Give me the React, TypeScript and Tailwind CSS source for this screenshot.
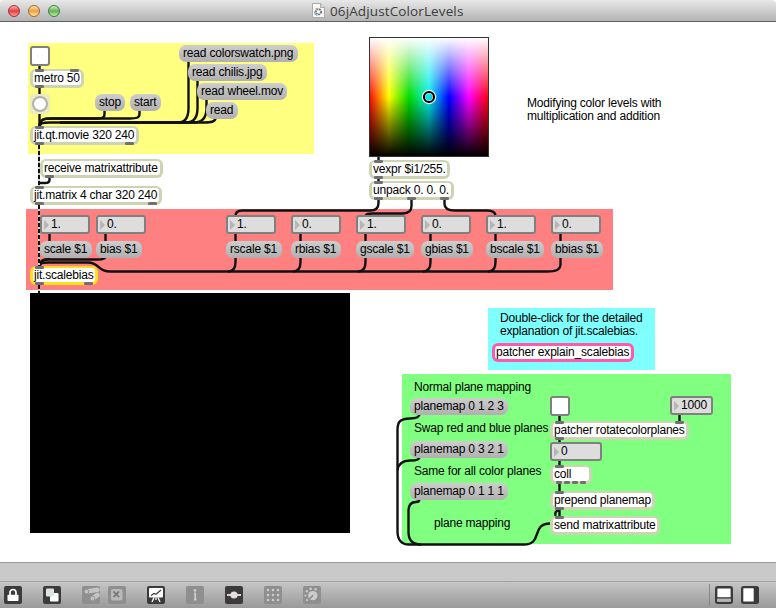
import type { ReactNode } from "react";

type Item = { text: string; at: string };

const objects: Item[] = [
  { text: "metro 50", at: "left-[30px] top-[69px] w-[54px]" },
  { text: "jit.qt.movie 320 240", at: "left-[30px] top-[126px] w-[109px]" },
  { text: "receive matrixattribute", at: "left-[40px] top-[159px] w-[123px]" },
  { text: "jit.matrix 4 char 320 240", at: "left-[30px] top-[186px] w-[132px]" },
  { text: "vexpr $i1/255.", at: "left-[369px] top-[160px] w-[81px]" },
  { text: "unpack 0. 0. 0.", at: "left-[369px] top-[181px] w-[85px]" },
  { text: "patcher rotatecolorplanes", at: "left-[550px] top-[421px] w-[139px]" },
  { text: "coll", at: "left-[550px] top-[465px] w-[42px]" },
  { text: "prepend planemap", at: "left-[550px] top-[491px] w-[105px]" },
  { text: "send matrixattribute", at: "left-[550px] top-[516px] w-[110px]" },
];

const messages: Item[] = [
  { text: "read colorswatch.png", at: "left-[179px] top-[45px] w-[119px]" },
  { text: "read chilis.jpg", at: "left-[188px] top-[64px] w-[79px]" },
  { text: "read wheel.mov", at: "left-[197px] top-[83px] w-[90px]" },
  { text: "read", at: "left-[206px] top-[102px] w-[32px]" },
  { text: "stop", at: "left-[95px] top-[94px] w-[30px]" },
  { text: "start", at: "left-[130px] top-[94px] w-[31px]" },
  { text: "scale $1", at: "left-[40px] top-[241px] w-[52px]" },
  { text: "bias $1", at: "left-[96px] top-[241px] w-[46px]" },
  { text: "rscale $1", at: "left-[226px] top-[241px] w-[56px]" },
  { text: "rbias $1", at: "left-[291px] top-[241px] w-[50px]" },
  { text: "gscale $1", at: "left-[356px] top-[241px] w-[58px]" },
  { text: "gbias $1", at: "left-[421px] top-[241px] w-[52px]" },
  { text: "bscale $1", at: "left-[486px] top-[241px] w-[58px]" },
  { text: "bbias $1", at: "left-[551px] top-[241px] w-[52px]" },
  { text: "planemap 0 1 2 3", at: "left-[410px] top-[398px] w-[98px]" },
  { text: "planemap 0 3 2 1", at: "left-[410px] top-[441px] w-[98px]" },
  { text: "planemap 0 1 1 1", at: "left-[410px] top-[483px] w-[98px]" },
];

const numbers: Item[] = [
  { text: "1.", at: "left-[40px] top-[215px] w-[50px]" },
  { text: "0.", at: "left-[96px] top-[215px] w-[50px]" },
  { text: "1.", at: "left-[226px] top-[215px] w-[50px]" },
  { text: "0.", at: "left-[291px] top-[215px] w-[50px]" },
  { text: "1.", at: "left-[356px] top-[215px] w-[50px]" },
  { text: "0.", at: "left-[421px] top-[215px] w-[50px]" },
  { text: "1.", at: "left-[486px] top-[215px] w-[50px]" },
  { text: "0.", at: "left-[551px] top-[215px] w-[50px]" },
  { text: "1000", at: "left-[670px] top-[396px] w-[43px]" },
  { text: "0", at: "left-[550px] top-[442px] w-[52px]" },
];

const comments: Item[] = [
  { text: "Modifying color levels with\nmultiplication and addition", at: "left-[527px] top-[97px]" },
  { text: "Double-click for the detailed\nexplanation of jit.scalebias.", at: "left-[500px] top-[312px]" },
  { text: "Normal plane mapping", at: "left-[414px] top-[381px]" },
  { text: "Swap red and blue planes", at: "left-[414px] top-[422px]" },
  { text: "Same for all color planes", at: "left-[414px] top-[465px]" },
  { text: "plane mapping", at: "left-[434px] top-[517px]" },
];

const panels = [
  "left-[28px] top-[43px] w-[286px] h-[111px] bg-[#ffff80]",
  "left-[26px] top-[209px] w-[587px] h-[81px] bg-[#ff8080]",
  "left-[30px] top-[293px] w-[320px] h-[240px] bg-black",
  "left-[488px] top-[308px] w-[167px] h-[62px] bg-[#80ffff]",
  "left-[402px] top-[374px] w-[329px] h-[170px] bg-[#80ff80]",
];

const cords = [
  "M39.5 64V70", "M39.5 87V95", "M39.5 112V127",
  "M104.5 110V114C104.5 118 102 118.5 96 118.5H52C44 118.5 40 119 39.5 126",
  "M139.5 110V114C139.5 118 136 118.5 130 118.5H52C44 118.5 40 119 39.5 126",
  "M188.5 61V108C188.5 117 185 122.5 178 122.5H50C43 122.5 40 122.5 39.5 127",
  "M197.5 80V108C197.5 117 194 122.5 186 122.5H60",
  "M206.5 99V108C206.5 117 203 122.5 194 122.5H60",
  "M215.5 118C215.5 122 211 122.5 204 122.5H60",
  "M49.5 177V180Q49.5 183 45 183H40",
  "M49.5 233V242", "M105.5 233V242",
  "M49.5 257Q49 259.5 44 260Q40 261 39.5 267",
  "M105.5 257Q105 259.5 98 259.5H46Q40 260 39.5 267",
  "M39.5 267C40 263 42 262.5 48 262.5H88C100 262.5 97 271.5 110 271.5H547C556 271.5 560.5 270 560.5 264V232",
  "M235.5 232V262Q235.5 271.5 228 271.5", "M300.5 232V262Q300.5 271.5 293 271.5",
  "M365.5 232V262Q365.5 271.5 358 271.5", "M430.5 232V262Q430.5 271.5 423 271.5",
  "M495.5 232V262Q495.5 271.5 488 271.5",
  "M378.5 156V161", "M378.5 178V182",
  "M378.5 199V203Q378.5 210.5 370 210.5H242Q235.5 210.5 235.5 216",
  "M411.5 199V206Q411.5 213 403 213.5H372Q366 213.5 365.5 216",
  "M444.5 199V204Q444.5 210.5 455 210.5H487Q495.5 210.5 495.5 216",
  "M559.5 415V422", "M679.5 414V422", "M559.5 439V443", "M559.5 460V466", "M559.5 483V492",
  "M559.5 509V517M559.5 510Q554 511 555.5 516",
  "M419.5 414Q419.5 418.5 410 418.5C399 418.5 397.5 423 397.5 430V532Q398 544.5 409 544.5H524C543 544.5 531 523.5 550 523.5",
  "M419.5 457Q419.5 460.5 411 460.5Q399 460 397.5 470",
  "M419.5 499Q419.5 502 416 502Q408.5 502 408.5 511V532Q408.5 544.5 421 544.5",
];

const videoCords = ["M39 145V187", "M39 205V266", "M39 285V293"];

const ports: [number, number][] = [
  [35, 69], [70, 69], [35, 85], [35, 126], [35, 142], [125, 142], [45, 175],
  [35, 186], [35, 202], [148, 202], [35, 266], [35, 282], [84, 282],
  [374, 160], [374, 176], [374, 181], [374, 197], [407, 197], [440, 197],
  [555, 421], [675, 421], [555, 437], [555, 465], [555, 491], [555, 507], [555, 516],
];

function Box({ text, at }: Item) {
  return (
    <div className={`absolute h-[19px] rounded-[6px] ${at} bg-[#ccd4b2] p-[3px] pt-[2px]`}>
      <div className="h-[14px] rounded-[3px] bg-white pl-px leading-[15px]">{text}</div>
    </div>
  );
}

function NumberBox({ text, at }: Item) {
  return (
    <div className={`absolute flex h-[19px] items-center rounded-[3px] border-2 border-[#808080] bg-[#dddddd] pl-[2px] ${at}`}>
      <span className="mr-[2px] h-0 w-0 border-y-[5px] border-l-[5px] border-y-transparent border-l-[#b5b5b5]" />
      <span className="pb-px leading-[14px]">{text}</span>
    </div>
  );
}

function ColorSwatch() {
  return (
    <svg className="absolute left-[369px] top-[37px]" width="120" height="120">
      <defs>
        <linearGradient id="hue">
          <stop offset="0" stopColor="#f00" />
          <stop offset=".1667" stopColor="#ff0" />
          <stop offset=".3333" stopColor="#0d0" />
          <stop offset=".5" stopColor="#0ee" />
          <stop offset=".6667" stopColor="#00f" />
          <stop offset=".8333" stopColor="#f0f" />
          <stop offset="1" stopColor="#f00" />
        </linearGradient>
        <linearGradient id="light" x2="0" y2="1">
          <stop offset="0" stopColor="#fff" />
          <stop offset=".5" stopColor="#fff" stopOpacity="0" />
          <stop offset=".5" stopColor="#000" stopOpacity="0" />
          <stop offset="1" stopColor="#000" />
        </linearGradient>
      </defs>
      <rect width="120" height="120" fill="url(#hue)" />
      <rect x=".5" y=".5" width="119" height="119" fill="url(#light)" stroke="#333" />
      <circle cx="60" cy="60" r="5.3" fill="none" stroke="#fff" strokeWidth="3.8" />
      <circle cx="60" cy="60" r="5" fill="none" stroke="#000" strokeWidth="2.2" />
    </svg>
  );
}

function Patcher() {
  return (
    <main className="relative h-[540px] shrink-0 overflow-hidden bg-white">
      <div className="absolute inset-x-0 top-[-22px] h-[562px] whitespace-pre text-[12px] tracking-[-0.19px] text-black">
        {panels.map((p) => <div key={p} className={`absolute ${p}`} />)}
        <svg className="absolute left-0 top-0" width="776" height="562" fill="none" stroke="#111" strokeWidth="2.4">
          {cords.map((d) => <path key={d} d={d} />)}
        </svg>
        <ColorSwatch />
        {["left-[30px] top-[46px]", "left-[550px] top-[396px]"].map((at) => (
          <div key={at} className={`absolute size-[20px] rounded-[3px] border-2 border-[#808080] bg-white ${at}`} />
        ))}
        <div className="absolute left-[30px] top-[94px] flex size-[20px] items-center justify-center rounded-[3px] bg-[#ebebbf]">
          <span className="size-[16px] rounded-full border-2 border-[#b0b0b0] bg-white" />
        </div>
        {objects.map((o) => <Box key={o.text} {...o} />)}
        <div className="absolute left-[30px] top-[266px] h-[19px] w-[68px] rounded-[6px] bg-[#ffe119] p-[3px] pt-[2px]">
          <div className="h-[14px] rounded-[3px] bg-white pl-px leading-[15px]">jit.scalebias</div>
        </div>
        <div className="absolute left-[492px] top-[343px] h-[19px] w-[142px] rounded-[6px] bg-[#ff59ac] p-[3px]">
          <div className="h-[13px] rounded-[3px] bg-white pl-px leading-[13px]">patcher explain_scalebias</div>
        </div>
        {messages.map((m) => (
          <div key={m.text} className={`absolute h-[17px] rounded-[7px] bg-linear-to-b from-[#cecece] to-[#b0b0b0] pl-[4px] leading-[17px] ${m.at}`}>{m.text}</div>
        ))}
        {numbers.map((n) => <NumberBox key={n.at} {...n} />)}
        {comments.map((c) => <div key={c.text} className={`absolute leading-[13px] ${c.at}`}>{c.text}</div>)}
        <svg className="absolute left-0 top-0" width="776" height="562">
          <g stroke="#ccc" strokeWidth="2">{videoCords.map((d) => <path key={d} d={d} />)}</g>
          <g stroke="#111" strokeWidth="2" strokeDasharray="4 2">{videoCords.map((d) => <path key={d} d={d} />)}</g>
          {ports.map(([x, y]) => <rect key={`${x}-${y}`} x={x} y={y} width="9" height="3" rx="1.2" fill="#707070" />)}
          {[556, 564, 572, 580].map((x) => <rect key={x} x={x} y="481" width="6" height="3" rx="1.2" fill="#707070" />)}
        </svg>
      </div>
    </main>
  );
}

function Tool({ dim, children }: { dim?: boolean; children: ReactNode }) {
  return (
    <svg width="18" height="18" viewBox="0 0 18 18" className="shrink-0">
      <rect width="18" height="18" rx="2" fill={dim ? "#8f8f8f" : "#3b3b3b"} />
      {children}
    </svg>
  );
}

function Toolbar() {
  return (
    <footer className="flex h-[27px] shrink-0 items-start border-t border-[#a3a3a3] bg-linear-to-b from-[#c6c6c6] to-[#9a9a9a] pl-1 pt-1">
      <div className="flex gap-[21px]">
        <Tool>
          <path d="M6 9V6.5a3 3 0 0 1 6 0V9" fill="none" stroke="#fff" strokeWidth="1.7" />
          <rect x="3.5" y="8.7" width="11" height="6.3" rx=".7" fill="#fff" />
        </Tool>
        <Tool>
          <rect x="7" y="7" width="8.5" height="8.5" rx="1" fill="#fff" />
          <rect x="3" y="2.5" width="8" height="8" rx="1" fill="#dce5e3" />
        </Tool>
        <div className="flex gap-2">
          <Tool dim>
            <g stroke="#c4c4c4" strokeWidth="4.6" strokeLinecap="round"><path d="M4.5 5.5L15.5 3.7M10.5 12.5L15.5 9" /></g>
            <g fill="#c4c4c4" stroke="#8f8f8f" strokeWidth=".9"><circle cx="4.5" cy="5.6" r="2.3" /><circle cx="10.5" cy="12.4" r="2.3" /></g>
          </Tool>
          <Tool dim>
            <rect x="3" y="3" width="11.5" height="11.5" rx="2" fill="#b9b9b9" />
            <path d="M5.5 5.5l5.5 5.5M11 5.5L5.5 11" stroke="#737373" strokeWidth="1.7" />
          </Tool>
        </div>
        <Tool>
          <rect x="2" y="2" width="14" height="9.5" rx="1" fill="#fff" />
          <path d="M4 9.5l3-2 2 .7L14 4" fill="none" stroke="#3b3b3b" strokeWidth="1.2" />
          <path d="M7 11.5L5 16M11 11.5l2 4.5M9 11.5V14" stroke="#fff" strokeWidth="1.3" />
        </Tool>
        <Tool dim>
          <circle cx="9" cy="4.4" r="1.3" fill="#ccc" />
          <path d="M8 7.4h1.2v6.1M8 13.7h2.4" fill="none" stroke="#ccc" strokeWidth="1.8" />
        </Tool>
        <Tool>
          <path d="M2 9h14" stroke="#eee5e5" strokeWidth="1.8" />
          <circle cx="9" cy="9" r="3.6" fill="#e6dede" />
        </Tool>
        <Tool dim>
          {[4, 9, 14].map((y) => [4, 9, 14].map((x) => <circle key={`${x}${y}`} cx={x} cy={y} r="1.3" fill="#ccc" />))}
        </Tool>
        <Tool dim>
          <circle cx="9.8" cy="9.6" r="4.7" fill="#ccc" />
          <path d="M6.5 13l3.5-3.7" stroke="#858585" strokeWidth="1.4" />
          <g fill="#ccc"><circle cx="4" cy="14" r="1.1" /><circle cx="2.3" cy="9.5" r="1.1" /><circle cx="3.8" cy="5.2" r="1.2" /><circle cx="7.7" cy="2.7" r="1.3" /><circle cx="12.7" cy="3.2" r="1.2" /></g>
        </Tool>
      </div>
      <div className="ml-auto mr-[17px] flex gap-2">
        <span className="-mr-[3px] -mt-[2px] h-[22px] w-px bg-[#888]" />
        <svg width="18" height="18">
          <rect x="1.2" y="1.2" width="15.6" height="15.6" rx="1.5" fill="#fff" stroke="#3b3b3b" strokeWidth="2.4" />
          <path d="M2.4 12.2h13.2v3.4H2.4z" fill="#b5b5b5" />
          <path d="M2 11.9h14" stroke="#3b3b3b" strokeWidth="1.4" />
        </svg>
        <svg width="18" height="18">
          <rect width="18" height="18" rx="2.5" fill="#3b3b3b" />
          <rect x="2.3" y="2.3" width="10.4" height="13.2" rx=".5" fill="#fff" />
        </svg>
      </div>
    </footer>
  );
}

const lights = [
  "border-[#9c3339] from-[#ffaaa7] via-[#e33b44] to-[#ff9995]",
  "border-[#a1662b] from-[#ffe4a5] via-[#eca145] to-[#ffe691]",
  "border-[#3d7940] from-[#ceefbd] via-[#62b358] to-[#bdf29f]",
];

function TitleBar() {
  return (
    <header className="flex h-[22px] shrink-0 items-center rounded-t-[4px] border-b border-[#606060] bg-linear-to-b from-[#e8e8e8] to-[#b3b3b3]">
      <div className="flex w-[312px] gap-2 pl-2">
        {lights.map((c) => <span key={c} className={`size-[12px] rounded-full border bg-linear-to-b ${c}`} />)}
      </div>
      <svg width="13" height="15" viewBox="0 0 13 15">
        <path d="M.5.5h8l4 4v10H.5z" fill="#f8f8f8" stroke="#aaa" />
        <path d="M8.5.5v4h4" fill="#ddd" stroke="#aaa" />
        <circle cx="6.5" cy="8.8" r="2.6" fill="none" stroke="#777" strokeWidth="1.8" strokeDasharray="1.8 .7" />
        <path d="M2.3 8.5l1 2.8 2 1.2" fill="none" stroke="#6cbcdd" strokeWidth="1.2" />
        <path d="M3.5 6.5L5 5" stroke="#ed9c62" strokeWidth="1.2" />
      </svg>
      <h1 className="ml-[5px] font-['Open_Sans','Noto_Sans',sans-serif] text-[13.5px] leading-[20px] tracking-[0.12px] text-[#3c3c3c]">06jAdjustColorLevels</h1>
    </header>
  );
}

export default function App() {
  return (
    <div className="flex h-[608px] w-[776px] flex-col overflow-hidden bg-white font-['Liberation_Sans',Arial,sans-serif]">
      <TitleBar />
      <Patcher />
      <div className="h-[19px] shrink-0 border-t border-[#999] bg-[#c9c9c9]" />
      <Toolbar />
    </div>
  );
}
